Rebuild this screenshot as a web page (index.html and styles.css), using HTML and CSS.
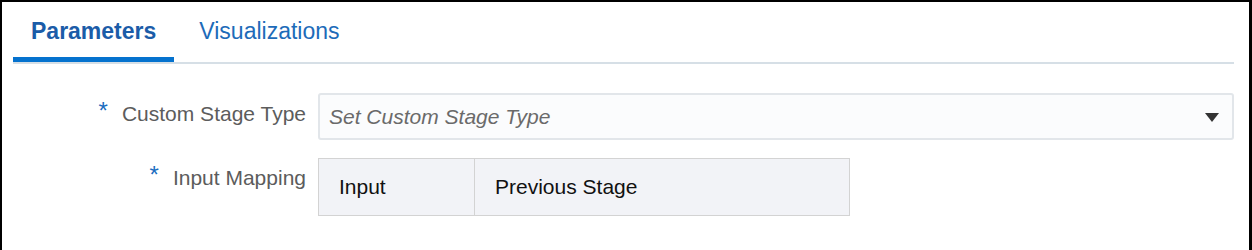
FILE: index.html
```html
<!DOCTYPE html>
<html>
<head>
<meta charset="utf-8">
<link rel="stylesheet" href="styles.css">
</head>
<body>
<div class="frame">
  <div class="tabs">
    <div class="tab tab-active">Parameters</div>
    <div class="tab">Visualizations</div>
  </div>
  <div class="form">
    <div class="label label-first"><span class="req">*</span>Custom Stage Type</div>
    <div class="select">
      <span class="placeholder">Set Custom Stage Type</span>
      <svg class="caret" width="14" height="9" viewBox="0 0 14 9"><path d="M0 0 H14 L7 9 Z" fill="#333"/></svg>
    </div>
    <div class="label label-second"><span class="req">*</span>Input Mapping</div>
    <div class="mapping">
      <div class="cell cell-input">Input</div>
      <div class="cell cell-prev">Previous Stage</div>
    </div>
  </div>
</div>
</body>
</html>
```
FILE: styles.css
```css
html, body {
  margin: 0;
  padding: 0;
  background: #fff;
}
body {
  font-family: "Liberation Sans", Arial, sans-serif;
}
.frame {
  box-sizing: border-box;
  width: 1252px;
  height: 250px;
  border-top: 2px solid #000;
  border-left: 2px solid #000;
  border-right: 3px solid #000;
  background: #fff;
}
.tabs {
  display: flex;
  margin: 0 15px 0 11px;
  border-bottom: 2px solid #d6dfe6;
}
.tab {
  padding: 16px 18px 13px;
  font-size: 23px;
  line-height: 26px;
  color: #1d6bb9;
  border-bottom: 5px solid transparent;
}
.tab + .tab {
  margin-left: 7px;
}
.tab-active {
  font-weight: bold;
  color: #1b5ca8;
  border-bottom-color: #0572ce;
}
.form {
  display: grid;
  grid-template-columns: 304px 1fr;
  column-gap: 12px;
  row-gap: 18px;
  margin: 29px 15px 0 0;
}
.label {
  text-align: right;
  font-size: 21px;
  line-height: 24px;
  color: #5c5c5c;
}
.label-first {
  padding-top: 8px;
}
.label-second {
  padding-top: 7px;
}
.req {
  display: inline-block;
  color: #1a6dc0;
  font-size: 24px;
  margin-right: 14px;
  position: relative;
  top: -2px;
}
.select {
  box-sizing: border-box;
  height: 47px;
  border: 2px solid #e2e6ea;
  border-radius: 3px;
  background: #fbfcfd;
  display: flex;
  align-items: center;
  padding: 0 13px 0 9px;
}
.placeholder {
  flex: 1;
  font-style: italic;
  font-size: 21px;
  color: #6a6a6a;
}
.caret {
  display: block;
  margin-top: 1px;
}
.mapping {
  box-sizing: border-box;
  width: 532px;
  height: 58px;
  border: 1px solid #d3d3d3;
  background: #f2f3f7;
  display: flex;
}
.cell {
  display: flex;
  align-items: center;
  padding-left: 20px;
  font-size: 21px;
  color: #111;
}
.cell-input {
  width: 135px;
  border-right: 1px solid #d3d3d3;
}
.cell-prev {
  flex: 1;
}
```
